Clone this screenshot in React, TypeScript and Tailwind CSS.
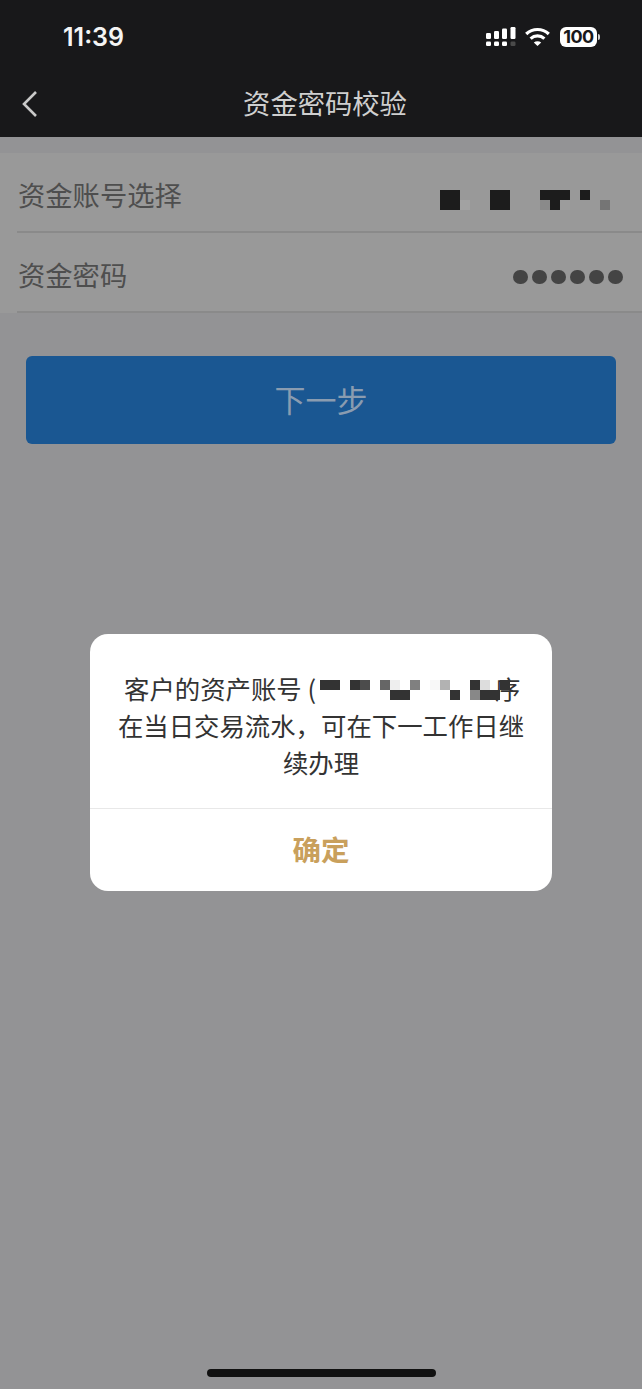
const CJK = "font-['Noto_Sans_CJK_SC','Noto_Sans',sans-serif]";

type Cell = [number, number, number, string];

function Mosaic({ w, h, cells, className }: { w: number; h: number; cells: Cell[]; className?: string }) {
  return (
    <svg width={w} height={h} viewBox={`0 0 ${w} ${h}`} shapeRendering="crispEdges" className={className}>
      {cells.map(([x, y, cw, c], i) => (
        <rect key={i} x={x} y={y} width={cw} height={10} fill={c} />
      ))}
    </svg>
  );
}

const accountCells: Cell[] = [
  [0, 0, 20, "#1c1c1c"], [0, 10, 20, "#1c1c1c"], [20, 10, 10, "#a2a2a2"],
  [50, 0, 20, "#1c1c1c"], [50, 10, 20, "#1c1c1c"],
  [100, 0, 30, "#1c1c1c"], [110, 10, 10, "#1c1c1c"], [100, 10, 10, "#8a8a8a"], [120, 10, 10, "#9c9c9c"],
  [140, 0, 10, "#1c1c1c"], [160, 10, 10, "#757575"],
];

const dialogCells: Cell[] = [
  [0, 0, 20, "#333333"],
  [30, 0, 10, "#333333"], [40, 0, 10, "#4c4c4c"],
  [60, 0, 10, "#666666"], [70, 0, 10, "#eeeeee"], [90, 0, 10, "#808080"], [70, 10, 20, "#333333"],
  [110, 0, 10, "#f8f8f8"], [120, 0, 10, "#b2b2b2"], [130, 10, 10, "#333333"],
  [150, 0, 10, "#333333"], [160, 0, 10, "#dddddd"], [150, 10, 10, "#888888"], [160, 10, 20, "#333333"], [180, 0, 10, "#333333"],
];

function SignalIcon() {
  return (
    <svg width="30" height="20" viewBox="0 0 30 20" fill="#fff">
      <rect x="0" y="6" width="5" height="6" rx="1.2" />
      <rect x="0" y="14.5" width="5" height="4.5" rx="1.2" />
      <rect x="8" y="4" width="5" height="8" rx="1.2" />
      <rect x="8" y="14.5" width="5" height="4.5" rx="1.2" />
      <rect x="16" y="1.5" width="5" height="10.5" rx="1.2" />
      <rect x="16" y="14.5" width="5" height="4.5" rx="1.2" />
      <rect x="24.5" y="0" width="5" height="12" rx="1.2" />
      <rect x="24.5" y="14.5" width="5" height="4.5" rx="1.2" fill="#4a4a4a" />
    </svg>
  );
}

function WifiIcon() {
  return (
    <svg width="25" height="20" viewBox="0 0 25 20" fill="none" stroke="#fff" strokeWidth="3.2">
      <path d="M1.2 7 C7.6 1 17.4 1 23.8 7" />
      <path d="M5.6 11.6 C9.6 8 15.4 8 19.4 11.6" />
      <path d="M8.8 15.6 L12.5 19 L16.2 15.6 C14 13.8 11 13.8 8.8 15.6 Z" fill="#fff" stroke="none" />
    </svg>
  );
}

export default function App() {
  return (
    <div className={`${CJK} relative flex h-[1389px] w-[642px] flex-col overflow-hidden bg-[#939395]`}>
      <header className="h-[137px] shrink-0 bg-[#18181a]">
        <div className="flex h-[70px] items-start justify-between pl-[63px] pr-[42px] pt-[20px]">
          <span className="font-['Inter',sans-serif] text-[25px] leading-[34px] font-semibold text-[#f4f4f4]">11:39</span>
          <div className="flex items-center pt-[7px]">
            <SignalIcon />
            <div className="ml-[9px]">
              <WifiIcon />
            </div>
            <div className="ml-[10px] flex items-center gap-[1px]">
              <div className="flex h-[20px] w-[37px] items-center justify-center rounded-[6px] bg-white font-['Inter',sans-serif] text-[18px] leading-none font-bold tracking-[-0.5px] text-[#18181a]">
                100
              </div>
              <div className="h-[6px] w-[2px] rounded-r-sm bg-[#cfcfcf]" />
            </div>
          </div>
        </div>
        <nav className="relative flex h-[67px] items-start justify-center pl-[8px] pt-[14px]">
          <svg width="18" height="28" viewBox="0 0 18 28" fill="none" stroke="#c9c9c9" strokeWidth="2.6" className="absolute left-[21px] top-[20px]">
            <path d="M15 2 L3 14 L15 26" />
          </svg>
          <h1 className="text-[27.3px] leading-[36px] font-normal text-[#cfcfcf]">资金密码校验</h1>
        </nav>
      </header>

      <section className="mt-[16px] h-[160px] shrink-0 bg-[#999999] pl-[17px]">
        <div className="flex h-[80px] items-center justify-between border-b-2 border-[#8a8a8a] pr-[32px]">
          <span className="ml-[1px] mt-[4px] text-[27.3px] leading-[36px] text-[#4e4e4e]">资金账号选择</span>
          <Mosaic w={170} h={20} cells={accountCells} className="mt-[16px]" />
        </div>
        <div className="flex h-[80px] items-center justify-between border-b-2 border-[#8a8a8a] pr-[19px]">
          <span className="ml-[1px] mt-[3px] text-[27.3px] leading-[36px] text-[#4e4e4e]">资金密码</span>
          <div className="mt-[10px] flex gap-[4.4px]">
            {[0, 1, 2, 3, 4, 5].map((i) => (
              <span key={i} className="h-[14.6px] w-[14.6px] rounded-full bg-[#444444]" />
            ))}
          </div>
        </div>
      </section>

      <div className="mx-[26px] mt-[43px] flex h-[88px] items-center justify-center rounded-[6px] bg-[#1a5792] pb-[2px] text-[31px] leading-[40px] text-[#8a9cb0]">
        下一步
      </div>

      <div className="absolute left-[90px] top-[634px] w-[462px] overflow-hidden rounded-[18px] bg-white">
        <div className="flex h-[174px] flex-col items-center pt-[36px] text-[25.4px] leading-[37px] text-[#333333]">
          <div className="relative w-[396px] whitespace-nowrap pl-[1px]">
            客户的资产账号 (
            <span className="absolute left-[372px] top-0">序</span>
            <Mosaic w={190} h={20} cells={dialogCells} className="absolute left-[197px] top-[10px]" />
          </div>
          <div className="whitespace-nowrap">在当日交易流水，可在下一工作日继</div>
          <div className="whitespace-nowrap">续办理</div>
        </div>
        <div className="flex h-[83px] items-center justify-center border-t border-[#e8e8e8] pb-[2px] text-[28.5px] leading-[38px] font-semibold text-[#c9a05c]">
          确定
        </div>
      </div>

      <div className="absolute bottom-[12px] left-[207px] h-[8px] w-[229px] rounded-full bg-[#111111]" />
    </div>
  );
}
